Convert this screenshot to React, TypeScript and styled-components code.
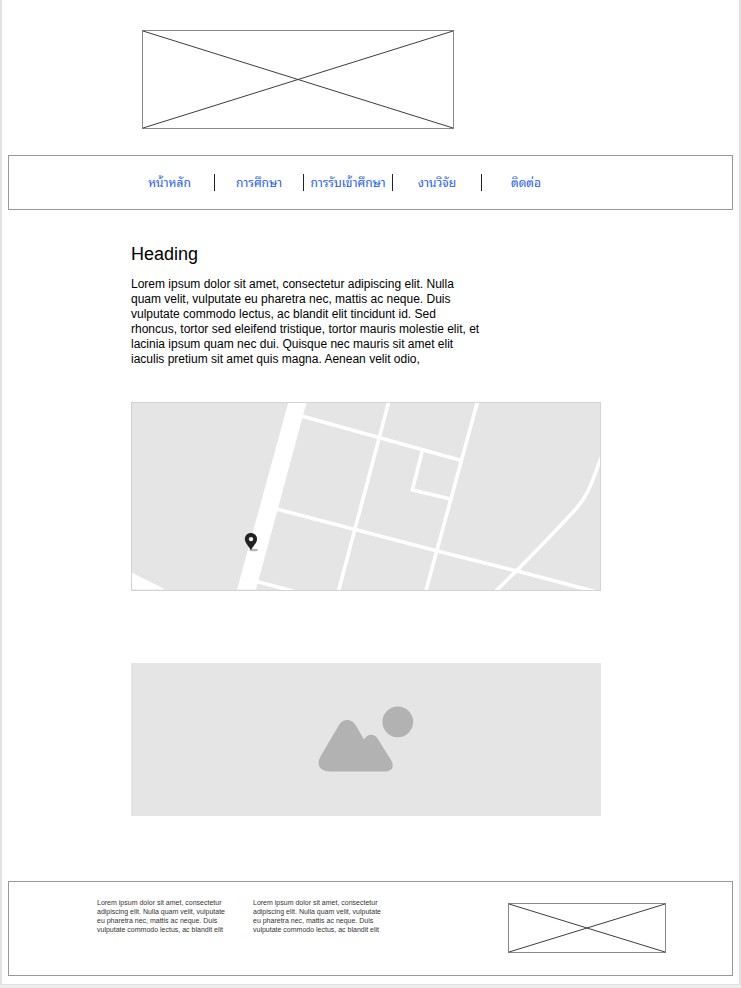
import React from "react";
import styled, { createGlobalStyle } from "styled-components";

const GlobalStyle = createGlobalStyle`
  * {
    box-sizing: border-box;
  }
  body {
    margin: 0;
    background: #eeeeee;
    color: #000000;
    font-family: "Liberation Sans", Arial, "Noto Sans Thai Looped", Loma, Waree, sans-serif;
  }
`;

const Page = styled.div`
  display: flex;
  flex-direction: column;
  margin-bottom: 3px;
  padding: 30px 6px 8px;
  background: #ffffff;
  border: solid #e2e2e2;
  border-width: 0 2px 1px;
`;

const Header = styled.header`
  padding: 0 134px;
`;

const CrossedBox = styled.svg<{ $width: number; $height: number }>`
  display: block;
  flex-shrink: 0;
  width: ${(p) => p.$width}px;
  height: ${(p) => p.$height}px;
  border: 1px solid #888888;
  overflow: visible;
`;

const Nav = styled.nav`
  display: flex;
  align-items: center;
  height: 55px;
  margin-top: 26px;
  padding: 0 116px;
  border: 1px solid #999999;
`;

const NavList = styled.ul`
  display: flex;
  margin: 0;
  padding: 0;
  list-style: none;
`;

const NavItem = styled.li`
  display: flex;
  align-items: center;
  justify-content: center;
  width: 89px;
  height: 17px;

  & + & {
    border-left: 1px solid #222222;
  }
`;

const NavLink = styled.a`
  color: #1a5cff;
  font-size: 12px;
  line-height: 16px;
  text-decoration: none;
  white-space: nowrap;
`;

const Main = styled.main`
  display: flex;
  flex-direction: column;
  padding: 33px 132px 65px 123px;
`;

const Heading = styled.h1`
  margin: 0;
  font-size: 18px;
  font-weight: 400;
  line-height: 22px;
`;

const Paragraph = styled.p`
  max-width: 352px;
  margin: 12px 0 0;
  font-size: 12px;
  line-height: 15px;
`;

const MapFigure = styled.figure`
  margin: 35px 0 0;
  background: #e5e5e5;
  border: 1px solid #d3d3d3;
`;

const Drawing = styled.svg`
  display: block;
  width: 100%;
  height: auto;
`;

const ImageFigure = styled.figure`
  display: flex;
  justify-content: center;
  align-items: center;
  height: 153px;
  margin: 72px 0 0;
  background: #e5e5e5;
`;

const Footer = styled.footer`
  display: flex;
  align-items: flex-start;
  height: 95px;
  padding: 16px 66px 0 88px;
  border: 1px solid #999999;
`;

const FooterText = styled.p`
  width: 132px;
  margin: 0 24px 0 0;
  color: #333333;
  font-size: 7px;
  line-height: 9px;
`;

const FooterLogo = styled.div`
  margin: 5px 0 0 auto;
`;

const links = ["หน้าหลัก", "การศึกษา", "การรับเข้าศึกษา", "งานวิจัย", "ติดต่อ"];

const footerCopy =
  "Lorem ipsum dolor sit amet, consectetur adipiscing elit. Nulla quam velit, vulputate eu pharetra nec, mattis ac neque. Duis vulputate commodo lectus, ac blandit elit";

function Logo({ width, height }: { width: number; height: number }) {
  return (
    <CrossedBox
      $width={width}
      $height={height}
      viewBox="0 0 100 100"
      preserveAspectRatio="none"
      role="img"
      aria-label="Logo"
    >
      <path d="M0 0L100 100M0 100L100 0" stroke="#3c3c3c" vectorEffect="non-scaling-stroke" />
    </CrossedBox>
  );
}

function StreetMap() {
  return (
    <Drawing viewBox="132 403 469 187" role="img" aria-label="Map">
      <path d="M288.5 403H306.7L256.3 590H237.3Z" fill="#fff" />
      <path d="M132 573L165.5 590H132Z" fill="#fff" />
      <g fill="none" stroke="#fff" strokeWidth="3.6">
        <path d="M302 416L462 460.6" />
        <path d="M276 509L437 551L517 571.2L596 592" />
        <path d="M257 582L295 592" />
        <path d="M389.5 401L338.8 592" />
        <path d="M478.4 401L426.3 592" />
        <path d="M423 450.5L413 490.2L451 499.3" />
        <path d="M496 592L517 571.5L555 532.5L577 509C590 494 593 482 602 458" />
      </g>
      <ellipse cx="254" cy="550.3" rx="4.2" ry="1.3" fill="#b5b5b5" />
      <path
        fill="#222"
        fillRule="evenodd"
        d="M251.2 533.2C247.6 533.2 245.1 535.9 245.1 539.2C245.1 543.2 249 546.2 251.2 550.6C253.4 546.2 257.3 543.2 257.3 539.2C257.3 535.9 254.8 533.2 251.2 533.2ZM251.2 537.2A2.2 2.2 0 1 1 251.2 541.6A2.2 2.2 0 1 1 251.2 537.2Z"
      />
    </Drawing>
  );
}

function PictureIcon() {
  return (
    <svg width="96" height="66" viewBox="318 707 96 66" fill="#b2b2b2" role="img" aria-label="Image">
      <circle cx="397.8" cy="722.8" r="15.4" />
      <path d="M339 726C343 719.2 351.5 719.2 355.5 726L364 740.6C367.5 734.5 374 734.3 377.5 739.5L391 761C394.5 767 392.5 772.4 385 772.4H330C319.5 772.4 316 765.5 320.5 757.5Z" />
    </svg>
  );
}

export default function App() {
  return (
    <>
      <GlobalStyle />
      <Page>
        <Header>
          <Logo width={312} height={99} />
        </Header>
        <Nav>
          <NavList>
            {links.map((label) => (
              <NavItem key={label}>
                <NavLink href="#">{label}</NavLink>
              </NavItem>
            ))}
          </NavList>
        </Nav>
        <Main>
          <Heading>Heading</Heading>
          <Paragraph>
            Lorem ipsum dolor sit amet, consectetur adipiscing elit. Nulla quam velit, vulputate eu
            pharetra nec, mattis ac neque. Duis vulputate commodo lectus, ac blandit elit tincidunt
            id. Sed rhoncus, tortor sed eleifend tristique, tortor mauris molestie elit, et lacinia
            ipsum quam nec dui. Quisque nec mauris sit amet elit iaculis pretium sit amet quis
            magna. Aenean velit odio,
          </Paragraph>
          <MapFigure>
            <StreetMap />
          </MapFigure>
          <ImageFigure>
            <PictureIcon />
          </ImageFigure>
        </Main>
        <Footer>
          <FooterText>{footerCopy}</FooterText>
          <FooterText>{footerCopy}</FooterText>
          <FooterLogo>
            <Logo width={158} height={50} />
          </FooterLogo>
        </Footer>
      </Page>
    </>
  );
}
